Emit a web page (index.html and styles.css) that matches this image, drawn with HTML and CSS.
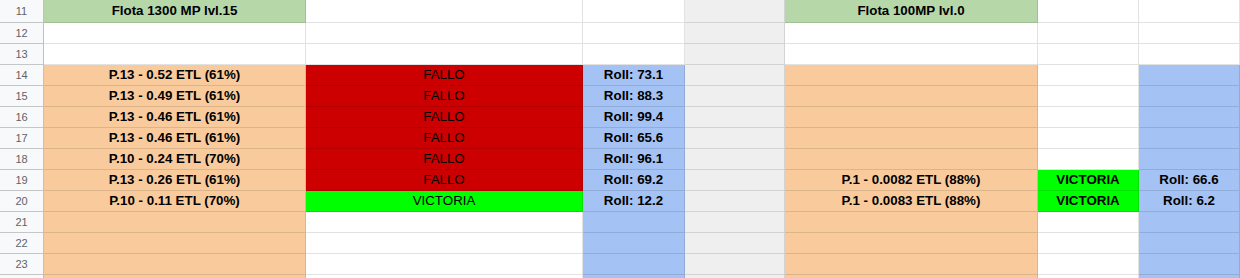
FILE: index.html
```html
<!DOCTYPE html>
<html>
<head>
<meta charset="utf-8">
<link rel="stylesheet" href="styles.css">
</head>
<body>
<div class="sheet">
  <div class="rh r-first">11</div>
  <div class="c hdr r-first">Flota 1300 MP lvl.15</div>
  <div class="c r-first"></div>
  <div class="c r-first"></div>
  <div class="c gray r-first"></div>
  <div class="c hdr r-first">Flota 100MP lvl.0</div>
  <div class="c r-first"></div>
  <div class="c r-first"></div>

  <div class="rh">12</div>
  <div class="c"></div><div class="c"></div><div class="c"></div><div class="c gray"></div><div class="c"></div><div class="c"></div><div class="c"></div>

  <div class="rh">13</div>
  <div class="c"></div><div class="c"></div><div class="c"></div><div class="c gray"></div><div class="c"></div><div class="c"></div><div class="c"></div>

  <div class="rh">14</div>
  <div class="c peach b">P.13 - 0.52 ETL (61%)</div>
  <div class="c red">FALLO</div>
  <div class="c blue b">Roll: 73.1</div>
  <div class="c gray"></div>
  <div class="c peach"></div>
  <div class="c"></div>
  <div class="c blue"></div>

  <div class="rh">15</div>
  <div class="c peach b">P.13 - 0.49 ETL (61%)</div>
  <div class="c red">FALLO</div>
  <div class="c blue b">Roll: 88.3</div>
  <div class="c gray"></div>
  <div class="c peach"></div>
  <div class="c"></div>
  <div class="c blue"></div>

  <div class="rh">16</div>
  <div class="c peach b">P.13 - 0.46 ETL (61%)</div>
  <div class="c red">FALLO</div>
  <div class="c blue b">Roll: 99.4</div>
  <div class="c gray"></div>
  <div class="c peach"></div>
  <div class="c"></div>
  <div class="c blue"></div>

  <div class="rh">17</div>
  <div class="c peach b">P.13 - 0.46 ETL (61%)</div>
  <div class="c red">FALLO</div>
  <div class="c blue b">Roll: 65.6</div>
  <div class="c gray"></div>
  <div class="c peach"></div>
  <div class="c"></div>
  <div class="c blue"></div>

  <div class="rh">18</div>
  <div class="c peach b">P.10 - 0.24 ETL (70%)</div>
  <div class="c red">FALLO</div>
  <div class="c blue b">Roll: 96.1</div>
  <div class="c gray"></div>
  <div class="c peach"></div>
  <div class="c"></div>
  <div class="c blue"></div>

  <div class="rh">19</div>
  <div class="c peach b">P.13 - 0.26 ETL (61%)</div>
  <div class="c red">FALLO</div>
  <div class="c blue b">Roll: 69.2</div>
  <div class="c gray"></div>
  <div class="c peach b">P.1 - 0.0082 ETL (88%)</div>
  <div class="c green b">VICTORIA</div>
  <div class="c blue b">Roll: 66.6</div>

  <div class="rh">20</div>
  <div class="c peach b">P.10 - 0.11 ETL (70%)</div>
  <div class="c green">VICTORIA</div>
  <div class="c blue b">Roll: 12.2</div>
  <div class="c gray"></div>
  <div class="c peach b">P.1 - 0.0083 ETL (88%)</div>
  <div class="c green b">VICTORIA</div>
  <div class="c blue b">Roll: 6.2</div>

  <div class="rh">21</div>
  <div class="c peach"></div><div class="c"></div><div class="c blue"></div><div class="c gray"></div><div class="c peach"></div><div class="c"></div><div class="c blue"></div>

  <div class="rh">22</div>
  <div class="c peach"></div><div class="c"></div><div class="c blue"></div><div class="c gray"></div><div class="c peach"></div><div class="c"></div><div class="c blue"></div>

  <div class="rh">23</div>
  <div class="c peach"></div><div class="c"></div><div class="c blue"></div><div class="c gray"></div><div class="c peach"></div><div class="c"></div><div class="c blue"></div>

  <div class="rh"></div>
  <div class="c peach"></div><div class="c"></div><div class="c blue"></div><div class="c gray"></div><div class="c peach"></div><div class="c"></div><div class="c blue"></div>
</div>
</body>
</html>
```

FILE: styles.css
```css
html, body {
  margin: 0;
  padding: 0;
  background: #ffffff;
  overflow: hidden;
}

.sheet {
  display: grid;
  grid-template-columns: 44px 262px 277px 102px 100px 253px 101px 101px;
  grid-template-rows: 23px;
  grid-auto-rows: 21px;
  width: 1240px;
  height: 278px;
  overflow: hidden;
  font-family: "Liberation Sans", Arial, sans-serif;
  font-size: 13.33px;
  color: #000000;
}

.rh {
  box-sizing: border-box;
  background: #f8f9fa;
  border-right: 1px solid #c0c0c0;
  border-bottom: 1px solid #c4c7c5;
  color: #5f6368;
  font-size: 11px;
  text-align: center;
  line-height: 20px;
}

.rh.r-first {
  line-height: 22px;
}

.c {
  box-sizing: border-box;
  border-right: 1px solid rgba(0, 0, 0, 0.115);
  border-bottom: 1px solid rgba(0, 0, 0, 0.115);
  text-align: center;
  line-height: 20px;
  white-space: nowrap;
  overflow: hidden;
}

.c.r-first {
  line-height: 22px;
}

.b { font-weight: bold; }

.hdr {
  background: #b6d7a8;
  font-weight: bold;
}

.gray { background: #efefef; }
.peach { background: #f9cb9c; }
.red { background: #cc0000; }
.blue { background: #a4c2f4; }
.green { background: #00ff00; }
```
